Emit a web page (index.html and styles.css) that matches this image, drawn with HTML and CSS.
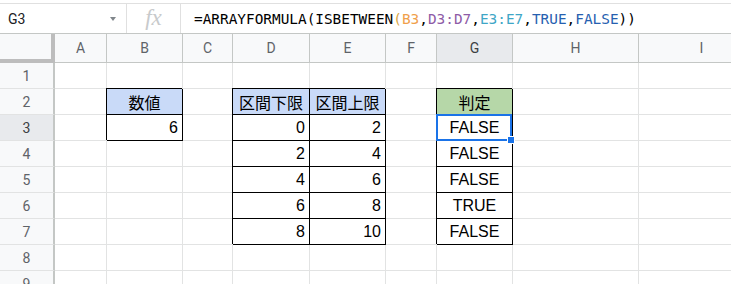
FILE: index.html
```html
<!doctype html>
<html lang="ja">
<head>
    <meta charset="UTF-8">
    <title>ISBETWEEN</title>
    <link rel="stylesheet" href="styles.css">
</head>
<body>

    <div class="formula-bar">
        <div class="name-box">
            <span class="ref">G3</span>
            <span class="arrow"></span>
        </div>
        <div class="fx">fx</div>
        <div class="formula">=ARRAYFORMULA(ISBETWEEN<span class="p-or">(</span><span class="r-or">B3</span>,<span class="r-pu">D3:D7</span>,<span class="r-cy">E3:E7</span>,<span class="kw">TRUE</span>,<span class="kw">FALSE</span>))</div>
    </div>

    <div class="sheet">
        <!-- header -->
        <div class="corner"></div>
        <div class="col-head">A</div>
        <div class="col-head">B</div>
        <div class="col-head">C</div>
        <div class="col-head">D</div>
        <div class="col-head">E</div>
        <div class="col-head">F</div>
        <div class="col-head active">G</div>
        <div class="col-head">H</div>
        <div class="col-head">I</div>

        <!-- 1 -->
        <div class="row-head">1</div>
        <div class="cell"></div><div class="cell"></div><div class="cell"></div><div class="cell"></div>
        <div class="cell"></div><div class="cell"></div><div class="cell"></div><div class="cell"></div><div class="cell"></div>

        <!-- 2 -->
        <div class="row-head">2</div>
        <div class="cell"></div>
        <div class="cell box ctr blue">数値</div>
        <div class="cell"></div>
        <div class="cell box ctr blue">区間下限</div>
        <div class="cell box ctr blue">区間上限</div>
        <div class="cell"></div>
        <div class="cell box ctr green">判定</div>
        <div class="cell"></div><div class="cell"></div>

        <!-- 3 -->
        <div class="row-head active">3</div>
        <div class="cell"></div>
        <div class="cell box num">6</div>
        <div class="cell"></div>
        <div class="cell box num">0</div>
        <div class="cell box num">2</div>
        <div class="cell"></div>
        <div class="cell box ctr selected">FALSE<span class="handle"></span></div>
        <div class="cell"></div><div class="cell"></div>

        <!-- 4 -->
        <div class="row-head">4</div>
        <div class="cell"></div><div class="cell"></div><div class="cell"></div>
        <div class="cell box num">2</div>
        <div class="cell box num">4</div>
        <div class="cell"></div>
        <div class="cell box ctr">FALSE</div>
        <div class="cell"></div><div class="cell"></div>

        <!-- 5 -->
        <div class="row-head">5</div>
        <div class="cell"></div><div class="cell"></div><div class="cell"></div>
        <div class="cell box num">4</div>
        <div class="cell box num">6</div>
        <div class="cell"></div>
        <div class="cell box ctr">FALSE</div>
        <div class="cell"></div><div class="cell"></div>

        <!-- 6 -->
        <div class="row-head">6</div>
        <div class="cell"></div><div class="cell"></div><div class="cell"></div>
        <div class="cell box num">6</div>
        <div class="cell box num">8</div>
        <div class="cell"></div>
        <div class="cell box ctr">TRUE</div>
        <div class="cell"></div><div class="cell"></div>

        <!-- 7 -->
        <div class="row-head">7</div>
        <div class="cell"></div><div class="cell"></div><div class="cell"></div>
        <div class="cell box num">8</div>
        <div class="cell box num">10</div>
        <div class="cell"></div>
        <div class="cell box ctr">FALSE</div>
        <div class="cell"></div><div class="cell"></div>

        <!-- 8 -->
        <div class="row-head">8</div>
        <div class="cell"></div><div class="cell"></div><div class="cell"></div><div class="cell"></div>
        <div class="cell"></div><div class="cell"></div><div class="cell"></div><div class="cell"></div><div class="cell"></div>

        <!-- 9 -->
        <div class="row-head">9</div>
        <div class="cell"></div><div class="cell"></div><div class="cell"></div><div class="cell"></div>
        <div class="cell"></div><div class="cell"></div><div class="cell"></div><div class="cell"></div><div class="cell"></div>
    </div>

</body>
</html>
```

FILE: styles.css
```css
*{
    margin: 0;
    padding: 0;
    box-sizing: border-box;
}
body{
    padding-top: 3px;
    overflow: hidden;
    background-color: #fff;
    font-family: "Liberation Sans", "Noto Sans CJK JP", sans-serif;
}

/* formula bar */
.formula-bar{
    display: flex;
    align-items: center;
    height: 30px;
    border-top: 1px solid #e0e0e0;
}
.name-box{
    display: flex;
    align-items: center;
    width: 127px;
    height: 100%;
    padding-left: 8px;
    border-right: 1px solid #e0e0e0;
}
.name-box .ref{
    font-family: Roboto, sans-serif;
    font-size: 14px;
    color: #202124;
    flex: 1;
}
.name-box .arrow{
    width: 0;
    height: 0;
    margin-right: 10px;
    border-left: 3.5px solid transparent;
    border-right: 3.5px solid transparent;
    border-top: 4px solid #80868b;
}
.fx{
    width: 54px;
    height: 100%;
    line-height: 28px;
    text-align: center;
    font-family: "Liberation Serif", serif;
    font-style: italic;
    font-size: 23px;
    color: #c8cacc;
    border-right: 1px solid #e0e0e0;
}
.formula{
    padding-left: 13px;
    font-family: "DejaVu Sans Mono", monospace;
    font-size: 14.4px;
    color: #000;
    white-space: nowrap;
}
.formula .p-or{ color: #d9a441; }
.formula .r-or{ color: #f0a04b; }
.formula .r-pu{ color: #8e5ba6; }
.formula .r-cy{ color: #3ea6c6; }
.formula .kw{ color: #2660b0; }

/* sheet grid */
.sheet{
    display: grid;
    grid-template-columns: 55px 52px 76px 50px 77px 76px 51px 76px 126px 126px;
    grid-template-rows: 29px repeat(9, 26px);
    width: 765px;
    border-top: 1px solid #c4c7c5;
}
.corner{
    background-color: #f8f9fa;
    border-right: 4px solid #bdbdbd;
    border-bottom: 4px solid #bdbdbd;
}
.col-head{
    display: flex;
    align-items: center;
    justify-content: center;
    background-color: #f8f9fa;
    border-right: 1px solid #c4c7c5;
    border-bottom: 1px solid #c4c7c5;
    font-family: Roboto, sans-serif;
    font-size: 14px;
    color: #5f6368;
}
.row-head{
    display: flex;
    align-items: center;
    justify-content: center;
    background-color: #f8f9fa;
    border-right: 2px solid #c4c7c5;
    border-bottom: 1px solid #e2e3e3;
    font-family: Roboto, sans-serif;
    font-size: 14px;
    color: #5f6368;
}
.col-head.active,
.row-head.active{
    background-color: #e8eaed;
    color: #3c4043;
}

.cell{
    display: flex;
    align-items: center;
    padding: 1px 4px 0;
    border-right: 1px solid #e2e3e3;
    border-bottom: 1px solid #e2e3e3;
    font-size: 16px;
    color: #000;
    white-space: nowrap;
}
.cell.num{
    justify-content: flex-end;
}
.cell.ctr{
    justify-content: center;
    padding: 1px 0 0;
}
.cell.box{
    border-right-color: #000;
    border-bottom-color: #000;
    box-shadow: -1px -1px 0 #000;
}
.cell.blue{
    background-color: #c9daf8;
}
.cell.green{
    background-color: #b6d7a8;
}

/* selected cell */
.cell.selected{
    position: relative;
}
.cell.selected::after{
    content: "";
    position: absolute;
    top: -1px;
    left: -1px;
    right: 0;
    bottom: -1px;
    border: 2px solid #1a73e8;
}
.cell.selected .handle{
    position: absolute;
    right: -3px;
    bottom: -4px;
    width: 8px;
    height: 8px;
    background-color: #1a73e8;
    border: 1px solid #fff;
    z-index: 1;
}
```
